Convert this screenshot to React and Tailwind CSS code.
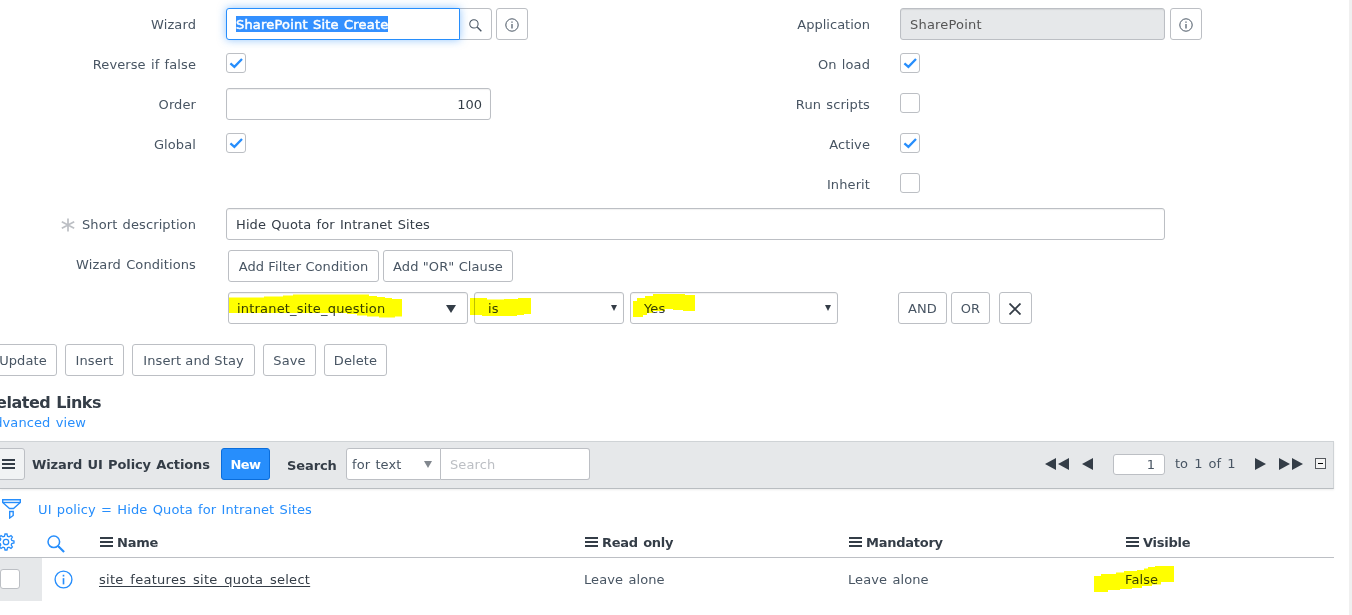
import clsx from 'clsx';

const leftFields = [
  { label: 'Reverse if false', type: 'check', checked: true },
  { label: 'Order', type: 'number', value: '100' },
  { label: 'Global', type: 'check', checked: true },
];

const rightFields = [
  { label: 'On load', checked: true },
  { label: 'Run scripts', checked: false },
  { label: 'Active', checked: true },
  { label: 'Inherit', checked: false },
];

const formButtons = [
  { label: 'Update', width: 'w-[68px]' },
  { label: 'Insert', width: 'w-[59px]' },
  { label: 'Insert and Stay', width: 'w-[123px]' },
  { label: 'Save', width: 'w-[53px]' },
  { label: 'Delete', width: 'w-[63px]' },
];

function Label({ children, className }) {
  return (
    <div className={clsx('flex h-8 shrink-0 items-center justify-end pt-0.5 text-[#485563]', className)}>
      {children}
    </div>
  );
}

function Checkbox({ checked }) {
  return (
    <div className="flex h-5 w-5 shrink-0 items-center justify-center rounded-[3px] border border-[#bcbfc4] bg-white">
      {checked && (
        <svg className="h-[18px] w-[18px]" viewBox="0 0 18 18" fill="none" stroke="#278efc" strokeWidth="2.3">
          <path d="M3.4 9.3L7.4 12.8L15 5" />
        </svg>
      )}
    </div>
  );
}

function Button({ children, className }) {
  return (
    <button
      className={clsx(
        'flex h-8 shrink-0 items-center justify-center rounded-[3px] border border-[#bcbfc4] bg-white pt-0.5 whitespace-nowrap text-[#485563]',
        className
      )}
    >
      {children}
    </button>
  );
}

function InfoIcon({ className, strokeWidth = 1 }) {
  return (
    <svg className={className} viewBox="0 0 14 14" fill="none" stroke="currentColor" strokeWidth={strokeWidth}>
      <circle cx="7" cy="7" r="6.2" />
      <path d="M7 6V10.6" strokeWidth={strokeWidth * 1.2} />
      <path d="M7 3.5V4.8" strokeWidth={strokeWidth * 1.2} />
    </svg>
  );
}

function SearchIcon({ className, strokeWidth = 1.1 }) {
  return (
    <svg className={className} viewBox="0 0 14 14" fill="none" stroke="currentColor" strokeWidth={strokeWidth}>
      <circle cx="5.3" cy="5.3" r="4.5" />
      <path d="M8.4 8.4L9.4 9.4" />
      <path d="M9 9L13.3 13.2" strokeWidth={strokeWidth * 1.4} />
    </svg>
  );
}

function MenuIcon({ className }) {
  return (
    <svg className={clsx('h-[11px] w-[13px] shrink-0', className)} viewBox="0 0 13 11" fill="#343d47">
      <rect x="0" y="0" width="13" height="2" />
      <rect x="0" y="4" width="13" height="2" />
      <rect x="0" y="8" width="13" height="2" />
    </svg>
  );
}

function Caret({ className }) {
  return (
    <svg className={className} viewBox="0 0 10 8" fill="currentColor" preserveAspectRatio="none">
      <path d="M0 0H10L5 8Z" />
    </svg>
  );
}

function PageArrow({ left, double }) {
  return (
    <svg
      className={clsx('h-3 shrink-0', double ? 'w-6' : 'w-[11px]', left && '-scale-x-100')}
      viewBox={double ? '0 0 24 12' : '0 0 11 12'}
      fill="#343d47"
    >
      <path d="M0 0L11 6L0 12Z" />
      {double && <path d="M13 0L24 6L13 12Z" />}
    </svg>
  );
}

// Marker strokes painted over a value
function Highlight({ className, viewBox, d }) {
  return (
    <svg className={clsx('pointer-events-none absolute mix-blend-multiply', className)} viewBox={viewBox} fill="#ffff00">
      <path d={d} />
    </svg>
  );
}

function WizardForm() {
  return (
    <div>
      <div className="flex">
        <div className="flex w-[674px] flex-col gap-2">
          <div className="flex">
            <Label className="w-[196px]">Wizard</Label>
            <div className="ml-[30px] flex">
              <div className="z-10 flex h-8 w-[234px] items-center rounded-l-[3px] border border-[#278efc] bg-white pl-[9px] shadow-[0_0_8px_rgba(39,142,252,0.5)]">
                <span className="bg-[#3390ff] pt-px leading-[15px] tracking-[0.19px] text-white [-webkit-text-stroke:0.5px_white]">
                  SharePoint Site Create
                </span>
              </div>
              <div className="flex h-8 w-8 items-center justify-center rounded-r-[4px] border border-l-0 border-[#bcbfc4] text-[#485563]">
                <SearchIcon className="mt-0.5 h-[13px] w-[13px]" />
              </div>
            </div>
            <Button className="ml-1 w-8">
              <InfoIcon className="h-[14px] w-[14px]" />
            </Button>
          </div>
          {leftFields.map((field) => (
            <div key={field.label} className="flex">
              <Label className="mr-[30px] w-[196px]">{field.label}</Label>
              {field.type === 'check' ? (
                <div className="pt-[5px]">
                  <Checkbox checked={field.checked} />
                </div>
              ) : (
                <div className="flex h-8 w-[265px] items-center justify-end rounded-[3px] border border-[#bcbfc4] pt-0.5 pr-2 tracking-normal text-[#343d47] shadow-[inset_0_1px_1px_rgba(0,0,0,0.06)]">
                  {field.value}
                </div>
              )}
            </div>
          ))}
        </div>
        <div className="flex flex-col gap-2">
          <div className="flex">
            <Label className="mr-[30px] w-[196px] tracking-normal">Application</Label>
            <div className="flex h-8 w-[265px] items-center rounded-[3px] border border-[#bcbfc4] bg-[#e6e8ea] pt-0.5 pl-[9px] text-[#555] shadow-[inset_0_1px_1px_rgba(0,0,0,0.08)]">
              <span className="tracking-[0.2px]">SharePoint</span>
            </div>
            <Button className="ml-[5px] w-8">
              <InfoIcon className="h-[14px] w-[14px]" />
            </Button>
          </div>
          {rightFields.map((field) => (
            <div key={field.label} className="flex">
              <Label className="mr-[30px] w-[196px]">{field.label}</Label>
              <div className="pt-[5px]">
                <Checkbox checked={field.checked} />
              </div>
            </div>
          ))}
        </div>
      </div>

      <div className="mt-2 flex">
        <Label className="mr-[30px] w-[196px]">
          <svg className="mr-[7px] h-[14px] w-[14px]" viewBox="0 0 14 14" stroke="#bcbfc4" strokeWidth="1.7">
            <path d="M7 0.5V13.5M0.8 3.8L13.2 10.2M13.2 3.8L0.8 10.2" />
          </svg>
          Short description
        </Label>
        <div className="flex h-8 w-[939px] items-center rounded-[3px] border border-[#bcbfc4] pt-0.5 pl-[9px] text-[#343d47] shadow-[inset_0_1px_1px_rgba(0,0,0,0.06)]">
          Hide Quota for Intranet Sites
        </div>
      </div>

      <div className="mt-[10px] flex">
        <Label className="-mt-0.5 mr-8 w-[196px]">Wizard Conditions</Label>
        <div>
          <div className="flex gap-1">
            <Button className="w-[151px]">Add Filter Condition</Button>
            <Button className="w-[130px]">Add "OR" Clause</Button>
          </div>
          <div className="mt-[10px] flex text-[#343d47]">
            <div className="relative flex h-8 w-[240px] items-center justify-between rounded-[3px] border border-[#bcbfc4] pr-[11px] pl-2 shadow-[inset_0_1px_1px_rgba(0,0,0,0.06)]">
              <span className="mt-0.5 tracking-[0.19px]">intranet_site_question</span>
              <Caret className="mt-px h-2 w-[10px]" />
              <Highlight
                className="top-0 left-0 h-[26px] w-[174px]"
                viewBox="0 0 174 26"
                d="M0 4.5H35V3.5H54V2.5H64V1.5H140V3H148V4H156V5H163V6H173V23.5H166V24.5H150V23.5H138V22.5H128V21H118V20H0Z"
              />
            </div>
            <div className="relative ml-1.5 flex h-8 w-[150px] items-center justify-between rounded-[3px] border border-[#bcbfc4] pr-1.5 pl-[13px] shadow-[inset_0_1px_1px_rgba(0,0,0,0.06)]">
              <span className="mt-0.5">is</span>
              <Caret className="h-1.5 w-1.5" />
              <Highlight
                className="top-[5px] -left-[5px] h-[18px] w-[61px]"
                viewBox="0 0 61 18"
                d="M0 0H17V1.5H34V1H48V0H61V16H54V17H47V18H12V17H0Z"
              />
            </div>
            <div className="relative ml-1.5 flex h-8 w-[208px] items-center justify-between rounded-[3px] border border-[#bcbfc4] pr-1.5 pl-[13px] shadow-[inset_0_1px_1px_rgba(0,0,0,0.06)]">
              <span className="mt-0.5">Yes</span>
              <Caret className="h-1.5 w-1.5" />
              <Highlight
                className="top-px left-0.5 h-[24px] w-[62px]"
                viewBox="0 0 62 24"
                d="M0 7H4V4H12V2H20V0H52V1H62V17H50V16H40V15H32V17H20V19H14V21H10V23H0Z"
              />
            </div>
            <Button className="ml-[60px] w-[49px]">AND</Button>
            <Button className="ml-1 w-[39px]">OR</Button>
            <Button className="ml-[9px] w-[33px]">
              <svg className="mr-px h-3 w-3" viewBox="0 0 12 12" stroke="#343d47" strokeWidth="1.8">
                <path d="M0.5 0.5L11.5 11.5M11.5 0.5L0.5 11.5" />
              </svg>
            </Button>
          </div>
        </div>
      </div>
    </div>
  );
}

function ListToolbar() {
  return (
    <div className="flex h-12 w-[1334px] items-start border-t border-r border-b border-t-[#cfd3d6] border-r-[#cfd3d6] border-b-[#b9bdc1] bg-[#e6e8ea] pt-1.5 shadow-[0_1px_2px_rgba(0,0,0,0.08)]">
      <div className="-ml-2 flex h-8 w-[33px] shrink-0 items-center justify-end rounded-[3px] border border-[#bcbfc4] bg-[#f1f3f4] pt-px pr-[9px]">
        <MenuIcon />
      </div>
      <div className="ml-[7px] flex h-8 w-[182px] items-center pt-0.5 font-bold tracking-[-0.12px] whitespace-nowrap">
        Wizard UI Policy Actions
      </div>
      <button className="ml-[7px] h-8 w-[49px] rounded-[3px] border border-[#0a6ddb] bg-[#278efc] pt-0.5 font-bold tracking-[-0.6px] text-white">
        New
      </button>
      <div className="ml-[17px] flex h-[34px] w-[59px] items-center pt-0.5 font-bold tracking-[-0.1px]">Search</div>
      <div className="flex h-8 w-[95px] items-center justify-between rounded-l-[3px] border border-[#bcbfc4] bg-white pr-2 pl-[5px] text-[#485563]">
        <span className="mt-0.5">for text</span>
        <Caret className="h-[7px] w-2 text-[#81878e]" />
      </div>
      <div className="flex h-8 w-[149px] items-center rounded-r-[3px] border border-l-0 border-[#bcbfc4] bg-white pt-0.5 pl-[9px] text-[#bcbfc4]">
        Search
      </div>
      <div className="ml-auto flex h-8 items-center tracking-normal">
        <PageArrow left double />
        <div className="w-[13px]" />
        <PageArrow left />
        <div className="ml-5 flex h-[21px] w-[52px] items-center justify-end rounded-[3px] border border-[#bcbfc4] bg-white pt-0.5 pr-[9px] text-[#485563]">
          1
        </div>
        <span className="mr-5 ml-[10px] w-[60px] whitespace-pre text-[#485563] [word-spacing:2px]">to 1 of 1</span>
        <PageArrow />
        <div className="w-[13px]" />
        <PageArrow double />
        <div className="-mt-px mr-[7px] ml-3 flex h-[11px] w-[11px] items-center justify-center border border-[#55595e] bg-[#f4f4f4]">
          <div className="h-px w-[5px] bg-black" />
        </div>
      </div>
    </div>
  );
}

function HeaderCell({ children, className }) {
  return (
    <div className={clsx('-mt-px flex shrink-0 items-center gap-1 font-bold tracking-[-0.25px]', className)}>
      <MenuIcon />
      {children}
    </div>
  );
}

function PolicyActions() {
  return (
    <div className="w-[1334px]">
      <div className="flex h-10 items-center text-[#278efc]">
        <svg className="ml-0.5 h-5 w-[19px]" viewBox="0 0 19 20" fill="none" stroke="currentColor" strokeWidth="1.4">
          <path d="M0.7 0.7H18.3V3.5L11.5 9.5H7.5L0.7 3.5Z" />
          <path d="M1 3.5H18" />
          <path d="M7.7 12.5H11.2V16.5L7.7 19Z" />
        </svg>
        <span className="mt-0.5 ml-[17px] tracking-[0.12px]">UI policy = Hide Quota for Intranet Sites</span>
      </div>
      <div className="flex h-[29px] items-center border-b border-[#bcbfc4]">
        <svg className="-mt-0.5 -ml-[3px] h-[18px] w-[18px] text-[#278efc]" viewBox="0 0 18 18" fill="none" stroke="currentColor" strokeWidth="1.3">
          <path d="M7.5 3.2L8 1H10L10.5 3.2L12 3.8L14 2.6L15.4 4L14.2 6L14.8 7.5L17 8V10L14.8 10.5L14.2 12L15.4 14L14 15.4L12 14.2L10.5 14.8L10 17H8L7.5 14.8L6 14.2L4 15.4L2.6 14L3.8 12L3.2 10.5L1 10V8L3.2 7.5L3.8 6L2.6 4L4 2.6L6 3.8Z" />
          <circle cx="9" cy="9" r="2.7" />
        </svg>
        <SearchIcon className="mt-0.5 ml-8 h-[18px] w-[18px] text-[#278efc]" strokeWidth={1.2} />
        <HeaderCell className="ml-[35px] w-[485px]">Name</HeaderCell>
        <HeaderCell className="w-[264px]">Read only</HeaderCell>
        <HeaderCell className="w-[277px]">Mandatory</HeaderCell>
        <HeaderCell>Visible</HeaderCell>
      </div>
      <div className="flex h-[43px] items-center text-[#485563]">
        <div className="flex h-full w-[42px] items-center bg-[#e6e8ea] pb-0.5">
          <Checkbox />
        </div>
        <InfoIcon className="ml-3 h-[19px] w-[19px] text-[#278efc]" />
        <div className="ml-[26px] w-[485px]">
          <span className="tracking-[0.27px] text-[#343d47] underline underline-offset-2">site_features_site_quota_select</span>
        </div>
        <div className="w-[264px]">Leave alone</div>
        <div className="w-[277px]">Leave alone</div>
        <div className="relative text-[#343d47]">
          False
          <Highlight
            className="-top-[6px] -left-[31px] h-[26px] w-[80px]"
            viewBox="0 0 80 26"
            d="M0 10H7V8H22V6.5H30V5H43V4H50V2.5H54V1H61V0H80V16H67V18.5H58V20H48V22H38V23H26V24H14V26H0Z"
          />
        </div>
      </div>
    </div>
  );
}

export default function App() {
  return (
    <div className="flex h-[615px] w-[1352px] overflow-hidden bg-white font-['DejaVu_Sans',Verdana,sans-serif] text-[13px] leading-4 tracking-[0.1px] text-[#343d47] [word-spacing:1px]">
      <div className="w-[1349px] shrink-0 overflow-hidden pt-2">
        <WizardForm />
        <div className="mt-5 -ml-[11px] flex gap-2">
          {formButtons.map((button) => (
            <Button key={button.label} className={button.width}>
              {button.label}
            </Button>
          ))}
        </div>
        <div className="mt-4 -ml-3 flex w-[113px] justify-end pt-px text-base leading-5 font-bold tracking-[-0.5px] whitespace-nowrap">
          Related Links
        </div>
        <div className="-ml-3 flex h-7 w-[98px] justify-end pt-0.5 whitespace-nowrap text-[#278efc]">Advanced view</div>
        <ListToolbar />
        <PolicyActions />
      </div>
      <div className="w-[3px] bg-[#f0f0f0]" />
    </div>
  );
}
